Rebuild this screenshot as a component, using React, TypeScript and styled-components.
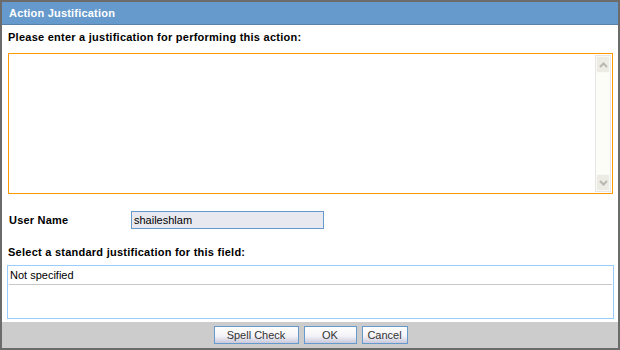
import React from 'react';
import styled, { createGlobalStyle } from 'styled-components';

const GlobalStyle = createGlobalStyle`
  html, body {
    margin: 0;
    padding: 0;
    background: #fff;
  }
  body {
    font-family: "Liberation Sans", Arial, sans-serif;
  }
`;

const Dialog = styled.div`
  width: 620px;
  height: 350px;
  box-sizing: border-box;
  border: 2px solid #6b6b6b;
  display: flex;
  flex-direction: column;
  background: #fff;
`;

const TitleBar = styled.div`
  flex-shrink: 0;
  height: 22px;
  background: #6699cc;
  border-bottom: 1px solid #5a7fa8;
  color: #fff;
  font-weight: bold;
  font-size: 11px;
  letter-spacing: 0.2px;
  line-height: 22px;
  padding-left: 7px;
`;

const Body = styled.div`
  flex: 1;
  display: flex;
  flex-direction: column;
  padding: 0 5px;
`;

const Heading = styled.div`
  font-size: 11px;
  font-weight: bold;
  letter-spacing: 0.25px;
  color: #000;
  margin-top: 5px;
  margin-left: 1px;
  height: 14px;
  line-height: 14px;
`;

const TextBox = styled.div`
  margin-top: 9px;
  margin-left: 1px;
  width: 605px;
  height: 141px;
  box-sizing: border-box;
  border: 1px solid #ff9900;
  display: flex;
  justify-content: flex-end;
  padding: 1px;
`;

const ScrollBar = styled.div`
  width: 16px;
  box-sizing: border-box;
  border: 1px solid #e6e6e6;
  background: #fdfdf8;
  display: flex;
  flex-direction: column;
  justify-content: space-between;
`;

const ScrollButton = styled.div`
  height: 15px;
  background: #ecece4;
  border: 1px solid #fafaf5;
  display: flex;
  align-items: center;
  justify-content: center;
`;

const FieldRow = styled.div`
  display: flex;
  align-items: center;
  margin-top: 17px;
  margin-left: 2px;
`;

const Label = styled.div`
  width: 122px;
  font-size: 11px;
  font-weight: bold;
  letter-spacing: 0.2px;
  color: #000;
`;

const NameInput = styled.div`
  width: 193px;
  height: 18px;
  box-sizing: border-box;
  border: 1px solid #6699cc;
  background: #e8e8f0;
  font-size: 11px;
  line-height: 16px;
  padding-left: 2px;
  color: #000;
`;

const SubHeading = styled(Heading)`
  margin-top: 16px;
`;

const ListBox = styled.div`
  margin-top: 6px;
  width: 607px;
  height: 54px;
  box-sizing: border-box;
  border: 1px solid #99ccff;
  padding: 1px;
`;

const ListItem = styled.div`
  height: 18px;
  box-sizing: border-box;
  border-bottom: 1px solid #c8c8c8;
  font-size: 11px;
  line-height: 16px;
  padding-left: 1px;
  color: #000;
`;

const Footer = styled.div`
  flex-shrink: 0;
  height: 26px;
  background: #cccccc;
  display: flex;
  justify-content: center;
  align-items: center;
  gap: 5px;
  padding-left: 1px;
`;

const Button = styled.button<{ $w: number }>`
  width: ${(p) => p.$w}px;
  height: 18px;
  box-sizing: border-box;
  border: 1px solid #6699cc;
  background: linear-gradient(#ffffff 0%, #f4f4f8 55%, #c9c9dc 100%);
  font-family: "Liberation Sans", Arial, sans-serif;
  font-size: 11px;
  color: #333;
  padding: 0;
  line-height: 16px;
  cursor: pointer;
`;

const Chevron = ({ up }: { up?: boolean }) => (
  <svg width="9" height="6" viewBox="0 0 9 6">
    <path
      d={up ? 'M1 5 L4.5 1.5 L8 5' : 'M1 1 L4.5 4.5 L8 1'}
      fill="none"
      stroke="#b8b8b0"
      strokeWidth="2"
    />
  </svg>
);

export default function App() {
  return (
    <>
      <GlobalStyle />
      <Dialog>
        <TitleBar>Action Justification</TitleBar>
        <Body>
          <Heading>Please enter a justification for performing this action:</Heading>
          <TextBox>
            <ScrollBar>
              <ScrollButton>
                <Chevron up />
              </ScrollButton>
              <ScrollButton>
                <Chevron />
              </ScrollButton>
            </ScrollBar>
          </TextBox>
          <FieldRow>
            <Label>User Name</Label>
            <NameInput>shaileshlam</NameInput>
          </FieldRow>
          <SubHeading>Select a standard justification for this field:</SubHeading>
          <ListBox>
            <ListItem>Not specified</ListItem>
          </ListBox>
        </Body>
        <Footer>
          <Button $w={85}>Spell Check</Button>
          <Button $w={53}>OK</Button>
          <Button $w={46}>Cancel</Button>
        </Footer>
      </Dialog>
    </>
  );
}
